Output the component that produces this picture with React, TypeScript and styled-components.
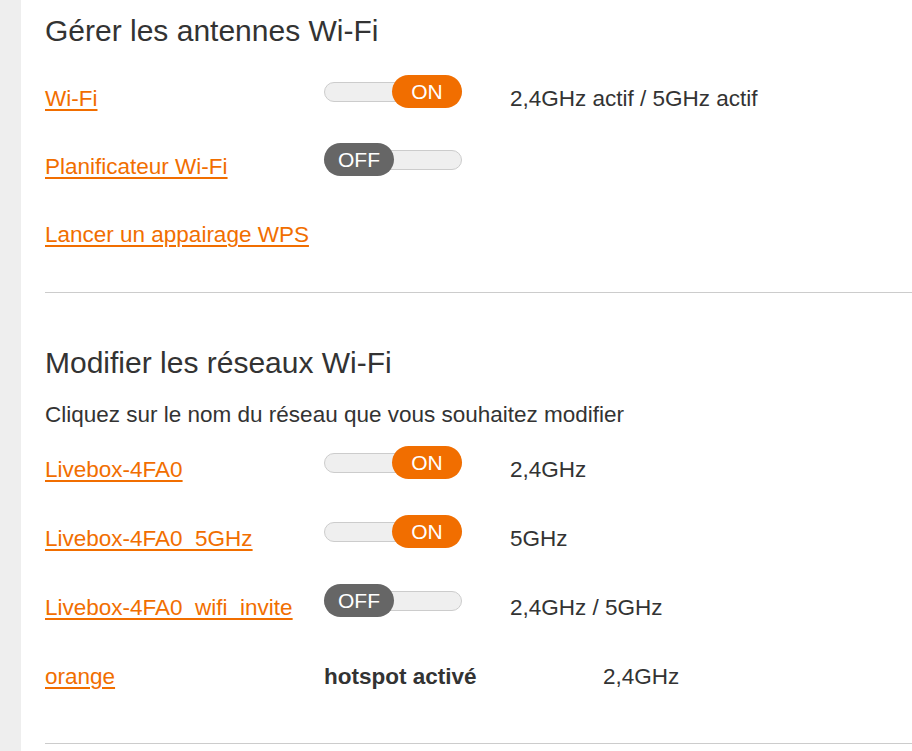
import React from "react";
import styled, { createGlobalStyle } from "styled-components";

type Network = {
  name: string;
  on?: boolean;
  band: string;
  hotspot?: boolean;
};

const networks: Network[] = [
  { name: "Livebox-4FA0", on: true, band: "2,4GHz" },
  { name: "Livebox-4FA0_5GHz", on: true, band: "5GHz" },
  { name: "Livebox-4FA0_wifi_invite", on: false, band: "2,4GHz / 5GHz" },
  { name: "orange", band: "2,4GHz", hotspot: true },
];

function Toggle({ on }: { on: boolean }) {
  return (
    <ToggleTrack>
      <ToggleKnob on={on}>{on ? "ON" : "OFF"}</ToggleKnob>
    </ToggleTrack>
  );
}

function App() {
  return (
    <>
      <GlobalStyle />
      <Page>
        <Sidebar />
        <Main>
          <Section bottom={30}>
            <Heading>Gérer les antennes Wi-Fi</Heading>
            <Row height={68}>
              <LinkCell href="#">Wi-Fi</LinkCell>
              <Toggle on />
              <Status>2,4GHz actif / 5GHz actif</Status>
            </Row>
            <Row height={68}>
              <LinkCell href="#">Planificateur Wi-Fi</LinkCell>
              <Toggle on={false} />
            </Row>
            <Row height={68}>
              <LinkCell href="#">Lancer un appairage WPS</LinkCell>
            </Row>
          </Section>
          <Divider />
          <Section top={52} bottom={39}>
            <Heading>Modifier les réseaux Wi-Fi</Heading>
            <Intro>Cliquez sur le nom du réseau que vous souhaitez modifier</Intro>
            {networks.map(n => (
              <Row height={69} key={n.name}>
                <LinkCell href="#">{n.name}</LinkCell>
                {n.hotspot ? (
                  <>
                    <Hotspot>hotspot activé</Hotspot>
                    <Text>{n.band}</Text>
                  </>
                ) : (
                  <>
                    <Toggle on={!!n.on} />
                    <Status>{n.band}</Status>
                  </>
                )}
              </Row>
            ))}
          </Section>
          <Divider />
        </Main>
      </Page>
    </>
  );
}

export default App;

const GlobalStyle = createGlobalStyle`
  body {
    margin: 0;
    background: #ffffff;
    font-family: "Liberation Sans", Arial, sans-serif;
    color: #333333;
  }
`;

const Page = styled.div`
  display: flex;
  min-height: 751px;
  overflow: hidden;
`;

const Sidebar = styled.aside`
  width: 21px;
  flex-shrink: 0;
  background-color: #eeeeee;
`;

const Main = styled.main`
  flex: 1;
  padding: 13px 0 0 24px;
`;

const Section = styled.section<{ top?: number; bottom?: number }>`
  padding-top: ${props => props.top || 0}px;
  padding-bottom: ${props => props.bottom || 0}px;
`;

const Heading = styled.h2`
  margin: 0 0 9px;
  font-size: 30px;
  line-height: 36px;
  font-weight: normal;
  color: #333333;
`;

const Intro = styled.p`
  margin: -9px 0 0;
  padding-top: 21px;
  font-size: 22.5px;
  line-height: 26px;
  color: #333333;
`;

const Row = styled.div<{ height: number }>`
  display: flex;
  align-items: center;
  height: ${props => props.height}px;
`;

const LinkCell = styled.a`
  width: 279px;
  flex-shrink: 0;
  padding-top: 14px;
  font-size: 22.5px;
  line-height: 26px;
  color: #f16e00;
  text-decoration: underline;
  text-decoration-thickness: 2px;
  text-underline-offset: 3px;
`;

const Status = styled.span`
  margin-left: 48px;
  padding-top: 14px;
  font-size: 22.5px;
  line-height: 26px;
  color: #333333;
`;

const Hotspot = styled.span`
  width: 279px;
  flex-shrink: 0;
  padding-top: 14px;
  font-size: 22.5px;
  line-height: 26px;
  font-weight: bold;
  color: #333333;
`;

const Text = styled.span`
  padding-top: 14px;
  font-size: 22.5px;
  line-height: 26px;
  color: #333333;
`;

const ToggleTrack = styled.div`
  position: relative;
  width: 138px;
  height: 20px;
  box-sizing: border-box;
  border: 1px solid #cccccc;
  border-radius: 10px;
  background-color: #efefef;
  flex-shrink: 0;
`;

const ToggleKnob = styled.div<{ on: boolean }>`
  position: absolute;
  top: -8px;
  ${props => (props.on ? "right: -1px;" : "left: -1px;")}
  width: 70px;
  height: 33px;
  border-radius: 17px;
  background-color: ${props => (props.on ? "#f16e00" : "#666666")};
  color: #ffffff;
  font-size: 21px;
  line-height: 33px;
  text-align: center;
`;

const Divider = styled.hr`
  margin: 0;
  border: none;
  border-top: 1px solid #cccccc;
`;
